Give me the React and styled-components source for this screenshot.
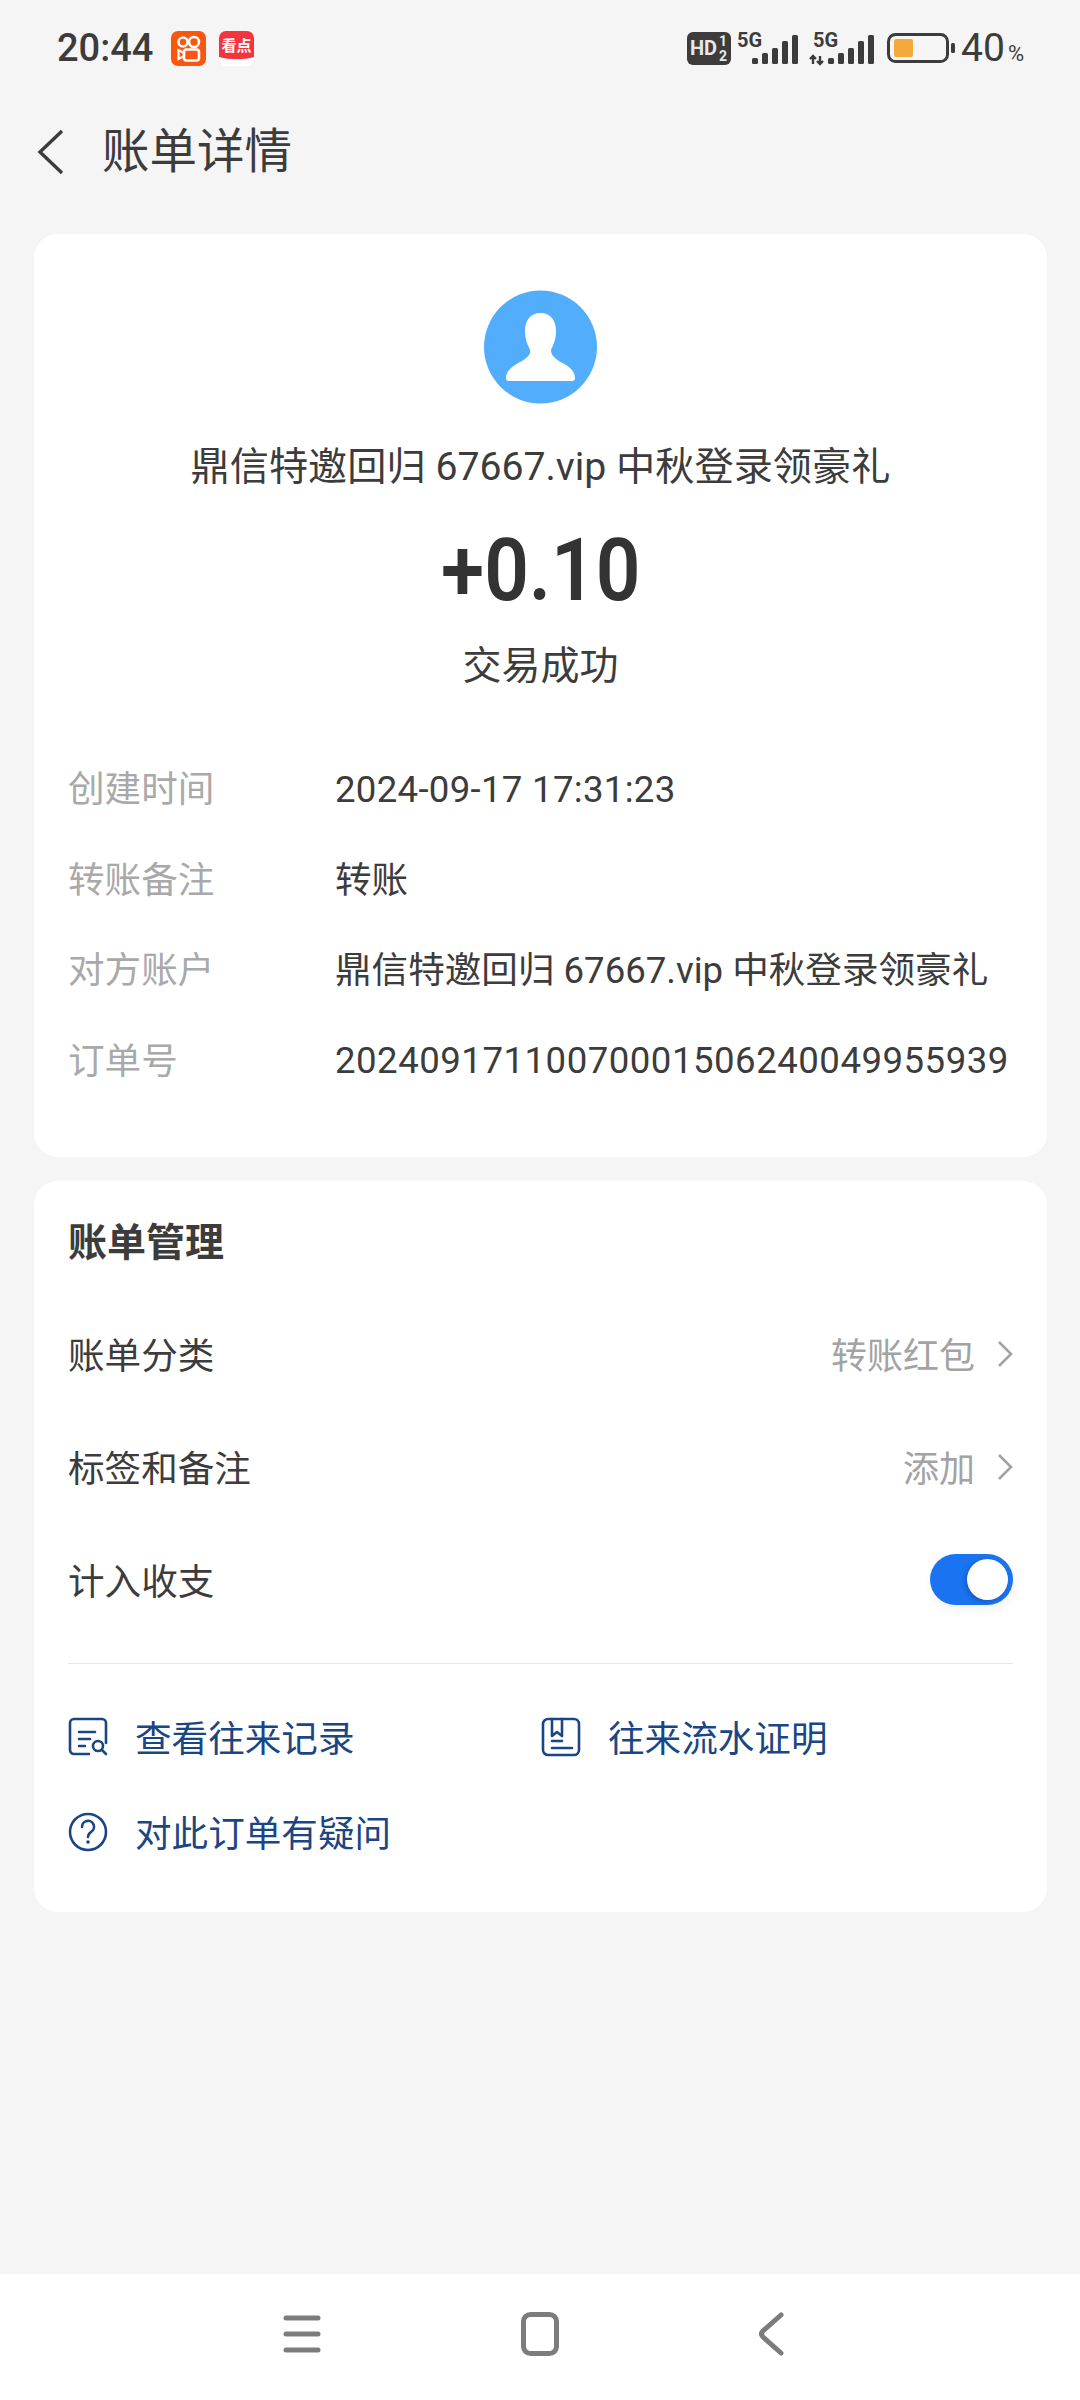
import React from 'react'
import styled, {createGlobalStyle} from 'styled-components'

const CJK = `Roboto, "Noto Sans CJK SC", sans-serif`

const GlobalStyle = createGlobalStyle`
    html, body {
        margin: 0;
        padding: 0;
        background: #f5f5f5;
    }
    body {
        font-family: ${CJK};
    }
`

const Page = styled.div`
    width: 1080px;
    height: 2400px;
    display: flex;
    flex-direction: column;
    background: #f5f5f5;
    color: #333;
    overflow: hidden;
`
const StatusBar = styled.div`
    height: 96px;
    flex: none;
    display: flex;
    align-items: center;
    padding: 0 56px 0 57px;
    box-sizing: border-box;
`
const Time = styled.div`
    font-size: 38px;
    font-weight: 500;
    color: #3c3c3c;
    width: 114px;
`
const AppIcon = styled.svg`
    width: 35px;
    height: 35px;
    margin-right: 13px;
    display: block;
`
const StatusRight = styled.div`
    margin-left: auto;
    display: flex;
    align-items: center;
`
const SignalIcon = styled.svg`
    display: block;
    overflow: visible;
    margin-left: ${props => props.$gap}px;
`
const Percent = styled.div`
    font-size: 39px;
    color: #3c3c3c;
    margin-left: 6px;
    display: flex;
    align-items: baseline;
    small {
        font-size: 22px;
        margin-left: 3px;
    }
`
const Header = styled.div`
    height: 108px;
    flex: none;
    display: flex;
    align-items: center;
    padding: 0 0 5px 37px;
    box-sizing: border-box;
`
const BackIcon = styled.svg`
    display: block;
    margin-top: 9px;
`
const Title = styled.div`
    font-size: 47.5px;
    color: #3c3c3c;
    margin-left: 37px;
`
const Main = styled.div`
    flex: 1;
    display: flex;
    flex-direction: column;
    gap: 24px;
    padding: 30px 33px 0 34px;
`
const Card = styled.div`
    background: #fff;
    border-radius: 24px;
    box-sizing: border-box;
    padding: ${props => props.$padding};
`
const Center = styled.div`
    display: flex;
    flex-direction: column;
    align-items: center;
`
const Name = styled.div`
    margin-top: 38px;
    font-size: 39.2px;
    line-height: 50px;
    color: #3c3c3c;
    white-space: nowrap;
`
const Amount = styled.div`
    margin-top: 28px;
    font-size: 87px;
    line-height: 100px;
    font-weight: 600;
    color: #333;
    transform: scaleX(0.9);
`
const State = styled.div`
    margin-top: 21px;
    font-size: 39px;
    line-height: 50px;
    color: #3c3c3c;
`
const DetailList = styled.div`
    margin-top: 53px;
`
const DetailRow = styled.div`
    height: 90.5px;
    display: flex;
    align-items: center;
    font-size: 36.6px;
    white-space: nowrap;
    padding-bottom: 5px;
    box-sizing: border-box;
`
const DetailLabel = styled.div`
    width: 267px;
    flex: none;
    color: #a9a9a9;
`
const DetailValue = styled.div`
    color: #3c3c3c;
    letter-spacing: ${props => props.$spacing || 0}px;
    padding-top: ${props => props.$spacing ? 5 : 0}px;
`
const SectionTitle = styled.div`
    font-size: 39px;
    line-height: 48px;
    font-weight: 700;
    color: #3c3c3c;
`
const ManageList = styled.div`
    margin-top: 32px;
`
const ManageRow = styled.div`
    height: 113px;
    display: flex;
    align-items: center;
    justify-content: space-between;
    font-size: 36.6px;
    color: #3c3c3c;
    padding-bottom: 5px;
    box-sizing: border-box;
`
const RowRight = styled.div`
    display: flex;
    align-items: center;
    font-size: 36px;
    color: #a3a3a3;
`
const Arrow = styled.svg`
    width: 18px;
    height: 28px;
    margin: 2px 0 0 20px;
    display: block;
`
const Toggle = styled.div`
    width: 83px;
    height: 51px;
    border-radius: 26px;
    background: #1a73f0;
    display: flex;
    align-items: center;
    justify-content: flex-end;
    padding-right: 5px;
    box-sizing: border-box;
    box-shadow: 2px 4px 10px rgba(0, 0, 0, 0.06);
`
const Knob = styled.div`
    width: 41px;
    height: 41px;
    border-radius: 50%;
    background: #fff;
    box-shadow: -2px 2px 5px rgba(0, 0, 0, 0.2);
`
const Divider = styled.div`
    height: 1px;
    background: #e6e6e6;
    margin-top: 25px;
    margin-bottom: 28px;
`
const LinkGrid = styled.div`
    display: grid;
    grid-template-columns: 473px 1fr;
    grid-auto-rows: 95px;
`
const LinkItem = styled.div`
    display: flex;
    align-items: center;
    font-size: 36.6px;
    color: #1b4685;
    white-space: nowrap;
    padding-bottom: 6px;
    box-sizing: border-box;
`
const LinkIcon = styled.svg`
    width: 40px;
    height: 40px;
    margin-right: 27px;
    display: block;
    flex: none;
`
const NavBar = styled.div`
    height: 126px;
    flex: none;
    background: #fff;
    display: flex;
    align-items: center;
    justify-content: space-between;
    padding: 0 296px 6px 283px;
    box-sizing: border-box;
`

const Signal = ({active, gap}) => (
    <SignalIcon $gap={gap} width="64" height="34" viewBox="0 0 64 34">
        <text x="3" y="16" fontSize="20" fontWeight="700" fontFamily="Roboto, sans-serif" fill="#3c3c3c">5G</text>
        {active && (
            <g stroke="#3c3c3c" strokeWidth="2.4" fill="none">
                <path d="M3 25v8M0 28l3-3 3 3" />
                <path d="M10 25v8M7 30l3 3 3-3" />
            </g>
        )}
        <rect x="18" y="27" width="6" height="6" rx="1.5" fill="#3c3c3c" />
        <rect x="28" y="22" width="6" height="11" rx="1.5" fill="#3c3c3c" />
        <rect x="38" y="17" width="6" height="16" rx="1.5" fill="#3c3c3c" />
        <rect x="48" y="10" width="6" height="23" rx="1.5" fill="#3c3c3c" />
        <rect x="58" y="4" width="6" height="29" rx="1.5" fill="#3c3c3c" />
    </SignalIcon>
)

const RowArrow = () => (
    <Arrow viewBox="0 0 18 28"><path d="M4 2l12 12L4 26" fill="none" stroke="#a3a3a3" strokeWidth="2.6" /></Arrow>
)

const details = [
    {label: '创建时间', value: '2024-09-17 17:31:23', spacing: 0.3},
    {label: '转账备注', value: '转账'},
    {label: '对方账户', value: '鼎信特邀回归 67667.vip 中秋登录领豪礼'},
    {label: '订单号', value: '20240917110070001506240049955939', spacing: 0.5},
]

const App = () => {
    return (
        <Page>
            <GlobalStyle />
            <StatusBar>
                <Time>20:44</Time>
                <AppIcon viewBox="0 0 35 35">
                    <rect width="35" height="35" rx="7" fill="#f9560f" />
                    <circle cx="12" cy="11" r="4.5" fill="none" stroke="#fff" strokeWidth="2.6" />
                    <circle cx="23" cy="11" r="5" fill="none" stroke="#fff" strokeWidth="2.6" />
                    <rect x="13" y="18.5" width="15" height="11" rx="2.5" fill="none" stroke="#fff" strokeWidth="2.6" />
                    <path d="M13 22l-5.5-3v9l5.5-3z" fill="none" stroke="#fff" strokeWidth="2.2" />
                </AppIcon>
                <AppIcon viewBox="0 0 35 35">
                    <rect width="35" height="35" rx="7" fill="#fff" />
                    <path d="M0 7a7 7 0 0 1 7-7h21a7 7 0 0 1 7 7v19c-10 3-24 3-35 0z" fill="#f5343f" />
                    <text x="17.5" y="20" fontSize="15" fontWeight="700" textAnchor="middle" fontFamily='"Noto Sans CJK SC", sans-serif' fill="#fff">看点</text>
                </AppIcon>
                <StatusRight>
                    <svg width="44" height="33" viewBox="0 0 44 33" style={{display: 'block'}}>
                        <rect width="44" height="33" rx="6" fill="#3c3c3c" />
                        <text x="3" y="23" fontSize="20" fontWeight="700" fontFamily="Roboto, sans-serif" fill="#e8e8e8">HD</text>
                        <text x="32" y="14" fontSize="14" fontWeight="700" fontFamily="Roboto, sans-serif" fill="#e8e8e8">1</text>
                        <text x="32" y="29" fontSize="14" fontWeight="700" fontFamily="Roboto, sans-serif" fill="#e8e8e8">2</text>
                    </svg>
                    <Signal gap={3} />
                    <Signal gap={12} active />
                    <svg width="68" height="30" viewBox="0 0 68 30" style={{display: 'block', marginLeft: '13px'}}>
                        <rect x="1.5" y="1.5" width="59" height="27" rx="7" fill="none" stroke="#3c3c3c" strokeWidth="3" />
                        <rect x="7" y="6" width="19" height="18" rx="2" fill="#f4a93c" />
                        <rect x="64" y="10" width="4" height="10" rx="1.5" fill="#3c3c3c" />
                    </svg>
                    <Percent>40<small>%</small></Percent>
                </StatusRight>
            </StatusBar>
            <Header>
                <BackIcon width="28" height="46" viewBox="0 0 28 46">
                    <path d="M25 2L3 23l22 21" fill="none" stroke="#3c3c3c" strokeWidth="3.4" />
                </BackIcon>
                <Title>账单详情</Title>
            </Header>
            <Main>
                <Card $padding="56px 34px 51px">
                    <Center>
                        <svg width="113" height="114" viewBox="0 0 113 114" style={{display: 'block'}}>
                            <circle cx="56.5" cy="57" r="56.5" fill="#52aefc" />
                            <path d="M56.5 23C46 23 41 31 41 41c0 9 3 14 5 19 1 4-2 7-8 11-10 5-16 10-16 17 0 2 1 3 3 3h63c2 0 3-1 3-3 0-7-6-12-16-17-6-4-8-7-8-11 2-5 5-10 5-19 0-10-5-18-15.500-18z" fill="#fff" />
                        </svg>
                        <Name>鼎信特邀回归 67667.vip 中秋登录领豪礼</Name>
                        <Amount>+0.10</Amount>
                        <State>交易成功</State>
                    </Center>
                    <DetailList>
                        {details.map(item => (
                            <DetailRow key={item.label}>
                                <DetailLabel>{item.label}</DetailLabel>
                                <DetailValue $spacing={item.spacing}>{item.value}</DetailValue>
                            </DetailRow>
                        ))}
                    </DetailList>
                </Card>
                <Card $padding="38px 34px 30px">
                    <SectionTitle>账单管理</SectionTitle>
                    <ManageList>
                        <ManageRow>
                            账单分类
                            <RowRight>
                                转账红包
                                <RowArrow />
                            </RowRight>
                        </ManageRow>
                        <ManageRow>
                            标签和备注
                            <RowRight>
                                添加
                                <RowArrow />
                            </RowRight>
                        </ManageRow>
                        <ManageRow>
                            计入收支
                            <Toggle><Knob /></Toggle>
                        </ManageRow>
                    </ManageList>
                    <Divider />
                    <LinkGrid>
                        <LinkItem>
                            <LinkIcon viewBox="0 0 40 40">
                                <g fill="none" stroke="#1b4685" strokeWidth="2.6" strokeLinecap="round" strokeLinejoin="round">
                                    <path d="M21 37H6a4 4 0 0 1-4-4V6a4 4 0 0 1 4-4h28a4 4 0 0 1 4 4v20" />
                                    <path d="M11 15h16M11 22h11M11 29h6" />
                                    <circle cx="30" cy="29" r="5" />
                                    <path d="M34 33l4 4" />
                                </g>
                            </LinkIcon>
                            查看往来记录
                        </LinkItem>
                        <LinkItem>
                            <LinkIcon viewBox="0 0 40 40">
                                <g fill="none" stroke="#1b4685" strokeWidth="2.6" strokeLinecap="round" strokeLinejoin="round">
                                    <rect x="2" y="2" width="36" height="36" rx="5" />
                                    <path d="M11 2v17l5-4 5 4V2" />
                                    <path d="M11 24h10M11 31h20" />
                                </g>
                            </LinkIcon>
                            往来流水证明
                        </LinkItem>
                        <LinkItem>
                            <LinkIcon viewBox="0 0 40 40">
                                <circle cx="20" cy="20" r="18" fill="none" stroke="#1b4685" strokeWidth="2.6" />
                                <path d="M14 15a6 6 0 1 1 9 5c-2 1.500-3 2.500-3 5" fill="none" stroke="#1b4685" strokeWidth="2.6" strokeLinecap="round" />
                                <circle cx="20" cy="30" r="1.800" fill="#1b4685" />
                            </LinkIcon>
                            对此订单有疑问
                        </LinkItem>
                    </LinkGrid>
                </Card>
            </Main>
            <NavBar>
                <svg width="38" height="38" viewBox="0 0 38 38" style={{display: 'block'}}>
                    <path d="M3 3h32M3 19h32M3 35h32" stroke="#7c7c7c" strokeWidth="5" strokeLinecap="round" />
                </svg>
                <svg width="38" height="44" viewBox="0 0 38 44" style={{display: 'block'}}>
                    <rect x="2.500" y="2.500" width="33" height="39" rx="7" fill="none" stroke="#7c7c7c" strokeWidth="5" />
                </svg>
                <svg width="26" height="44" viewBox="0 0 26 44" style={{display: 'block'}}>
                    <path d="M23 3L5 19c-2 2-2 4 0 6l18 16" fill="none" stroke="#7c7c7c" strokeWidth="5" strokeLinecap="round" />
                </svg>
            </NavBar>
        </Page>
    )
}

export default App
